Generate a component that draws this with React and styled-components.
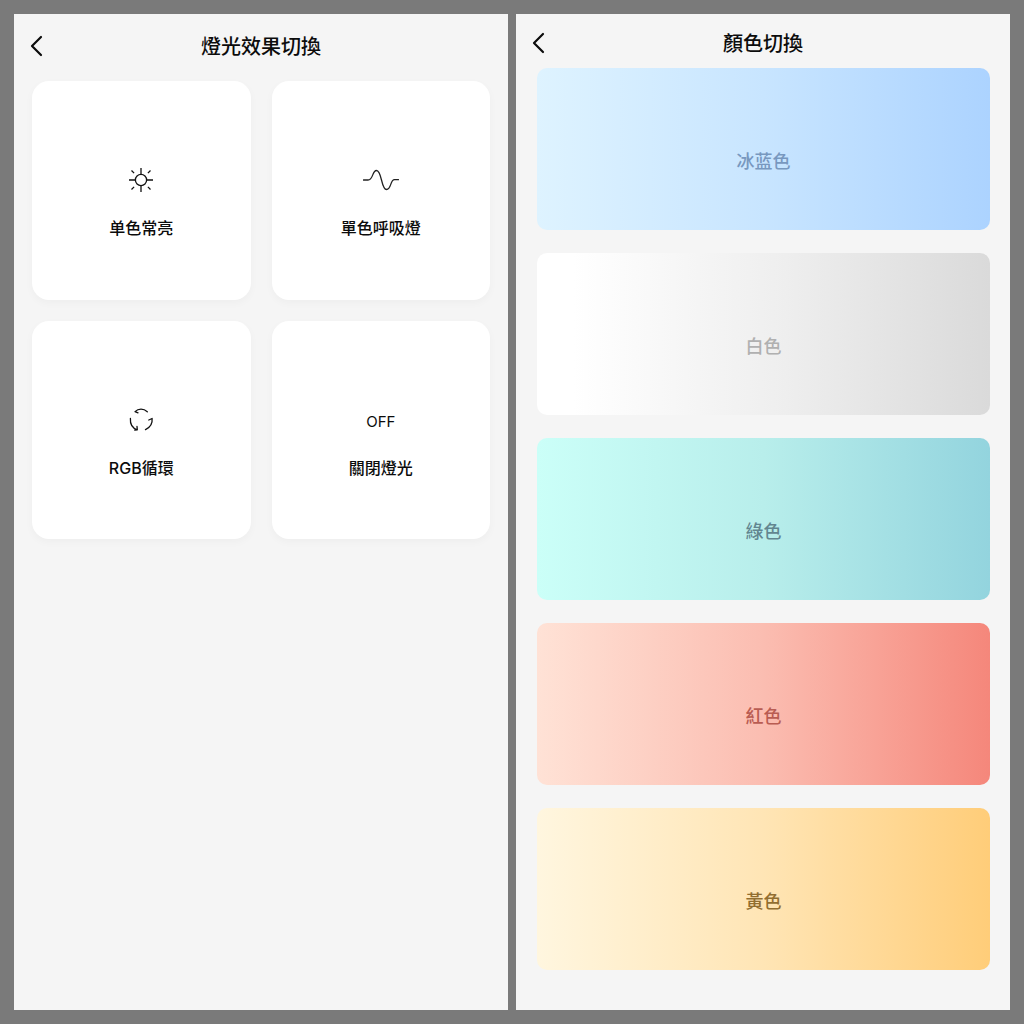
import React from 'react'
import styled, { createGlobalStyle } from 'styled-components'

const GlobalStyle = createGlobalStyle`
  * {
    box-sizing: border-box;
  }

  body {
    margin: 0;
    background: #7a7a7a;
    color: #0c0c0c;
    font-family: Inter, 'Noto Sans CJK SC', sans-serif;
  }

  button {
    border: 0;
    padding: 0;
    color: inherit;
    font: inherit;
    cursor: pointer;
  }
`

const Screens = styled.div`
  display: grid;
  grid-template-columns: repeat(2, minmax(0, 1fr));
  gap: 8px;
  min-height: 100vh;
  padding: 14px;
`

const Screen = styled.main`
  background: #f5f5f5;
`

const Header = styled.header`
  display: grid;
  grid-template-columns: 44px 1fr 44px;
  align-items: center;
  height: ${props => (props.$compact ? 50 : 56)}px;
  margin-top: 4px;
`

const BackButton = styled.button`
  display: flex;
  align-items: center;
  justify-content: center;
  height: 44px;
  background: none;
`

const Title = styled.h1`
  margin: 0;
  padding-top: 2px;
  font-size: 20px;
  font-weight: 500;
  line-height: 28px;
  text-align: center;
`

const EffectGrid = styled.div`
  display: grid;
  grid-template-columns: repeat(2, minmax(0, 1fr));
  gap: 21px;
  padding: 7px 18px 20px;
`

const EffectCard = styled.button`
  display: flex;
  flex-direction: column;
  align-items: center;
  justify-content: center;
  gap: 18px;
  aspect-ratio: 1;
  border-radius: 17px;
  background: #fff;
  box-shadow: 0 3px 8px rgba(0, 0, 0, 0.03);

  && {
    padding-top: 22px;
  }
`

const EffectIcon = styled.span`
  display: flex;
  align-items: center;
  justify-content: center;
  height: 36px;
`

const OffText = styled.span`
  padding-top: 4px;
  font-size: 15px;
  line-height: 20px;
`

const EffectLabel = styled.span`
  font-size: 16px;
  font-weight: 500;
  line-height: 24px;
`

const SwatchList = styled.div`
  display: flex;
  flex-direction: column;
  gap: 23px;
  padding: 0 20px 20px 21px;
`

const Swatch = styled.button`
  height: 162px;
  border-radius: 10px;
  background: linear-gradient(90deg, ${props => props.$stops});

  && {
    padding-top: 26px;
    color: ${props => props.$ink};
    font-size: 18px;
    font-weight: 500;
    line-height: 26px;
  }
`

const ChevronIcon = () => (
  <svg width="14" height="22" viewBox="0 0 14 22" fill="none" aria-hidden="true">
    <path
      d="M12 2 3 11l9 9"
      stroke="#0c0c0c"
      strokeWidth="2.2"
      strokeLinecap="round"
      strokeLinejoin="round"
    />
  </svg>
)

const SunIcon = () => (
  <svg width="26" height="26" viewBox="-13 -13 26 26" fill="none" stroke="#111" strokeWidth="1.3">
    <circle r="5.6" />
    <path d="M0-12v6M0 6v6M-12 0h6M6 0h6M-9.5-9.5l2.6 2.6M9.5-9.5 6.9-6.9M-9.5 9.5l2.6-2.6M9.5 9.5 6.9 6.9" />
  </svg>
)

const WaveIcon = () => (
  <svg width="36" height="22" viewBox="0 0 36 22" fill="none" stroke="#222" strokeWidth="1.3">
    <path
      d="M.5 11H5c5.5 0 4-9.500 8.500-9.500 5.500 0 4.500 19 10 19 5 0 3.500-9.800 8-9.800h4"
      strokeLinecap="round"
    />
  </svg>
)

const CycleIcon = () => (
  <svg
    width="26"
    height="26"
    viewBox="0 0 26 26"
    fill="none"
    stroke="#111"
    strokeWidth="1.3"
    strokeLinecap="round"
    strokeLinejoin="round">
    <path d="M19.3 4.7C15.5 1.3 10.5 1.3 7 4.6l3 1.2" />
    <path d="M2.4 11.5C2 17 4.8 21.3 9.3 22.8L9 19.5M9.3 22.8l-2.5.3" />
    <path d="M17.5 22.6c4.8-2.3 7.1-6.300 6.600-11.100l-3.300 1.500" />
  </svg>
)

const effects = [
  { label: '单色常亮', icon: <SunIcon /> },
  { label: '單色呼吸燈', icon: <WaveIcon /> },
  { label: 'RGB循環', icon: <CycleIcon /> },
  { label: '關閉燈光', icon: <OffText>OFF</OffText> },
]

const colors = [
  { label: '冰蓝色', ink: '#7898bf', stops: '#def3ff, #c8e5ff 50%, #acd3ff' },
  { label: '白色', ink: '#b0b0b0', stops: '#ffffff 8%, #eeeeee 55%, #dadada' },
  { label: '綠色', ink: '#628690', stops: '#cbfff8, #b8eeeb 50%, #93d4de' },
  { label: '紅色', ink: '#b95c52', stops: '#ffe2d6, #fbbdb1 50%, #f5877b' },
  { label: '黃色', ink: '#926e30', stops: '#fff6df, #ffe5b5 50%, #ffcd79' },
]

const EffectScreen = () => (
  <Screen>
    <Header>
      <BackButton aria-label="返回">
        <ChevronIcon />
      </BackButton>
      <Title>燈光效果切換</Title>
    </Header>
    <EffectGrid>
      {effects.map(effect => (
        <EffectCard key={effect.label}>
          <EffectIcon>{effect.icon}</EffectIcon>
          <EffectLabel>{effect.label}</EffectLabel>
        </EffectCard>
      ))}
    </EffectGrid>
  </Screen>
)

const ColorScreen = () => (
  <Screen>
    <Header $compact>
      <BackButton aria-label="返回">
        <ChevronIcon />
      </BackButton>
      <Title>顏色切換</Title>
    </Header>
    <SwatchList>
      {colors.map(color => (
        <Swatch key={color.label} $ink={color.ink} $stops={color.stops}>
          {color.label}
        </Swatch>
      ))}
    </SwatchList>
  </Screen>
)

const App = () => (
  <>
    <GlobalStyle />
    <Screens>
      <EffectScreen />
      <ColorScreen />
    </Screens>
  </>
)

export default App
